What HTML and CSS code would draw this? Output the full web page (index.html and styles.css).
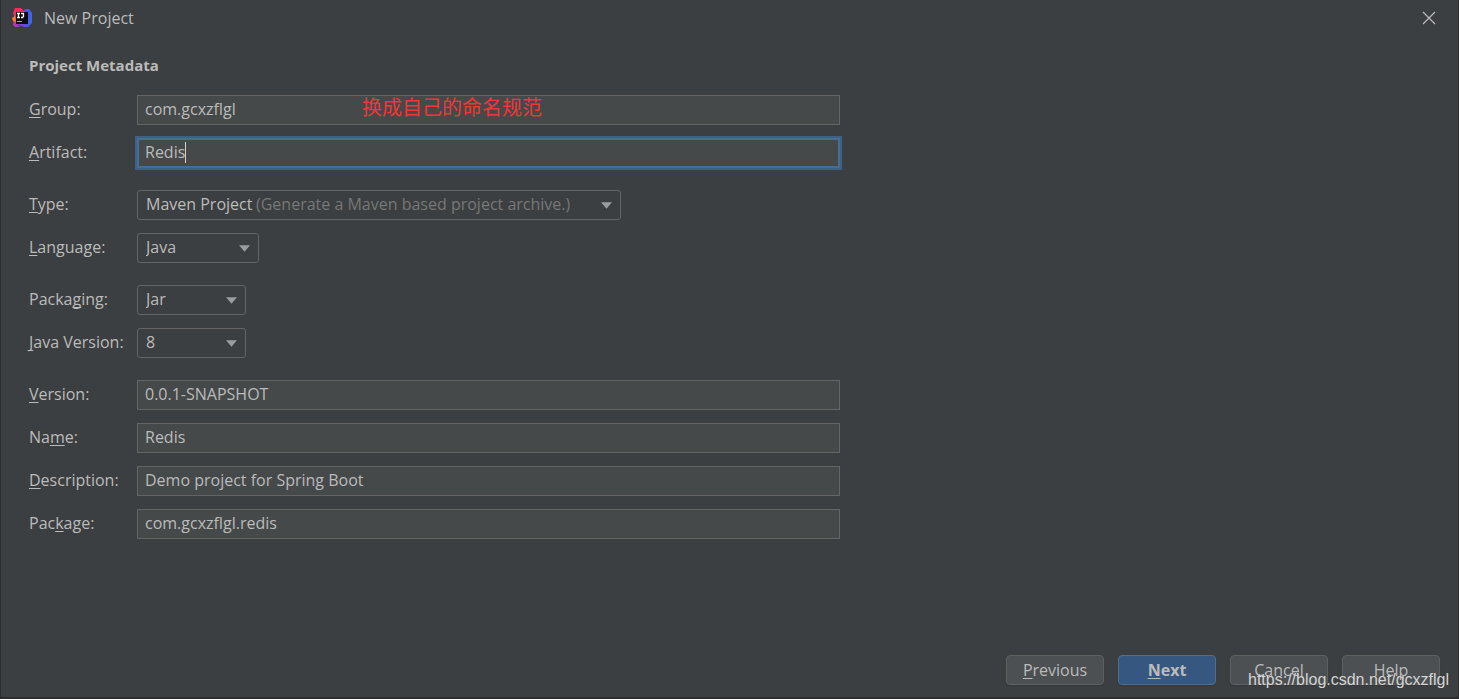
FILE: index.html
```html
<!DOCTYPE html>
<html lang="en">
<head>
<meta charset="utf-8">
<meta name="viewport" content="width=device-width, initial-scale=1">
<title>New Project</title>
<link rel="stylesheet" href="styles.css">
</head>
<body>
<main class="dialog">
  <header class="titlebar">
    <svg class="logo" viewBox="0 0 20 20" aria-hidden="true">
      <defs>
        <linearGradient id="lg-blue" x1="0" y1="0" x2="1" y2="0"><stop offset="0" stop-color="#a335c8"/><stop offset=".6" stop-color="#5a50d8"/><stop offset="1" stop-color="#2f6df2"/></linearGradient>
        <linearGradient id="lg-pink" x1="0" y1="0" x2="0" y2="1"><stop offset="0" stop-color="#fe2857"/><stop offset=".6" stop-color="#e8306a"/><stop offset="1" stop-color="#a335c8"/></linearGradient>
      </defs>
      <path fill="url(#lg-blue)" d="M13 1 17 1 20 5V15L16 19H12L4 16z"/>
      <path fill="url(#lg-pink)" d="M3 0 9 0 13 4 8 10 5 16 8 19H3L1 17 2 8 1 5z"/>
      <path fill="#fc801d" d="M0 10 3 8 4 14 1 13z"/>
      <path fill="#0c0c10" d="M4 4H16V16H4z"/>
      <path fill="none" stroke="#fff" stroke-width="1.3" d="M5 5.500H8M6.500 5V9M5 9.500H8M9 5.500H12M11.500 5V8.500L10.500 9.500H9"/>
      <path fill="#aaa" d="M5 13H10V14H5z"/>
    </svg>
    <h1 class="title">New Project</h1>
    <button class="close" type="button" aria-label="Close">
      <svg class="close-icon" viewBox="0 0 12 12" aria-hidden="true"><path d="M0 0 12 12M12 0 0 12"/></svg>
    </button>
  </header>

  <form class="content">
    <h2 class="heading">Project Metadata</h2>
    <div class="group">
      <div class="row">
        <label class="label" for="group"><u>G</u>roup:</label>
        <div class="field">
          <input class="text" id="group" type="text" value="com.gcxzflgl">
          <span class="note" lang="zh-CN">换成自己的命名规范</span>
        </div>
      </div>
      <div class="row">
        <label class="label" for="artifact"><u>A</u>rtifact:</label>
        <div class="field">
          <input class="text active" id="artifact" type="text" value="Redis">
          <span class="caret"></span>
        </div>
      </div>
    </div>
    <div class="group">
      <div class="row">
        <label class="label" for="type"><u>T</u>ype:</label>
        <div class="combo wide">
          <select class="select" id="type"><option>Maven Project</option></select>
          <span class="hint">(Generate a Maven based project archive.)</span>
          <svg class="arrow" viewBox="0 0 12 7" aria-hidden="true"><path d="M0 0H12L6 7z"/></svg>
        </div>
      </div>
      <div class="row">
        <label class="label" for="language"><u>L</u>anguage:</label>
        <div class="combo medium">
          <select class="select" id="language"><option>Java</option></select>
          <svg class="arrow" viewBox="0 0 12 7" aria-hidden="true"><path d="M0 0H12L6 7z"/></svg>
        </div>
      </div>
    </div>
    <div class="group">
      <div class="row">
        <label class="label" for="packaging">Packa<u>g</u>ing:</label>
        <div class="combo small">
          <select class="select" id="packaging"><option>Jar</option></select>
          <svg class="arrow" viewBox="0 0 12 7" aria-hidden="true"><path d="M0 0H12L6 7z"/></svg>
        </div>
      </div>
      <div class="row">
        <label class="label" for="java"><u>J</u>ava Version:</label>
        <div class="combo small">
          <select class="select" id="java"><option>8</option></select>
          <svg class="arrow" viewBox="0 0 12 7" aria-hidden="true"><path d="M0 0H12L6 7z"/></svg>
        </div>
      </div>
    </div>
    <div class="group">
      <div class="row">
        <label class="label" for="version"><u>V</u>ersion:</label>
        <input class="text" id="version" type="text" value="0.0.1-SNAPSHOT">
      </div>
      <div class="row">
        <label class="label" for="name">Na<u>m</u>e:</label>
        <input class="text" id="name" type="text" value="Redis">
      </div>
      <div class="row">
        <label class="label" for="description"><u>D</u>escription:</label>
        <input class="text" id="description" type="text" value="Demo project for Spring Boot">
      </div>
      <div class="row">
        <label class="label" for="package">Pac<u>k</u>age:</label>
        <input class="text" id="package" type="text" value="com.gcxzflgl.redis">
      </div>
    </div>
  </form>

  <footer class="actions">
    <button class="button" type="button"><u>P</u>revious</button>
    <button class="button primary" type="button"><u>N</u>ext</button>
    <button class="button" type="button">Cancel</button>
    <button class="button" type="button">Help</button>
    <span class="watermark">https://blog.csdn.net/gcxzflgl</span>
  </footer>
</main>
</body>
</html>
```
FILE: styles.css
```css
* { box-sizing: border-box; }

body {
  margin: 0;
  background: #3c3f41;
  color: #bbbbbb;
  font: 16px/20px "Open Sans", "Noto Sans", "Noto Sans CJK SC", sans-serif;
}

.dialog {
  display: flex;
  flex-direction: column;
  min-height: 100vh;
  border: solid #2b2d2e;
  border-width: 0 1px 2px;
}

u { text-underline-offset: 2px; text-decoration-thickness: 1px; text-decoration-skip-ink: none; }

.titlebar {
  display: flex;
  align-items: center;
  height: 36px;
  padding: 0 16px 0 11px;
}
.logo { width: 20px; height: 20px; }
.title { flex: 1; margin: 0 0 0 12px; font-size: 16px; font-weight: 400; }
.close {
  display: grid;
  place-items: center;
  width: 26px;
  height: 26px;
  padding: 0;
  border: 0;
  background: none;
}
.close-icon { width: 12px; height: 12px; overflow: visible; fill: none; stroke: #bbbbbb; stroke-width: 1.2; }

.content {
  display: flex;
  flex-direction: column;
  gap: 22px;
  width: 100%;
  max-width: 839px;
  padding: 19px 0 20px 28px;
}
.heading { margin: 0 0 -2px; font-size: 15px; line-height: 20px; font-weight: 700; }
.group { display: flex; flex-direction: column; gap: 13px; }
.row { display: grid; grid-template-columns: 108px minmax(0, 1fr); align-items: center; }
.label { padding-bottom: 2px; white-space: nowrap; }

.field { position: relative; }
.text {
  display: block;
  width: 100%;
  height: 30px;
  padding: 0 7px 2px;
  border: 1px solid #646464;
  border-radius: 0;
  outline: 0;
  background: #45494a;
  color: #bbbbbb;
  font: inherit;
}
.active { border-color: #466d94; box-shadow: 0 0 0 2px #3d6185, inset 0 0 0 1px #466d94; }
.caret { position: absolute; left: 48px; top: 4px; width: 1px; height: 21px; background: #d0d0d0; }
.note {
  position: absolute;
  left: 225px;
  top: 0;
  color: #f53535;
  font: 20px/24px "Noto Sans CJK SC", sans-serif;
}

.combo { position: relative; }
.wide { width: 484px; }
.medium { width: 122px; }
.small { width: 109px; }
.select {
  display: block;
  width: 100%;
  height: 30px;
  padding: 0 28px 2px 8px;
  border: 1px solid #646464;
  border-radius: 3px;
  appearance: none;
  background: #3c3f41;
  color: #bbbbbb;
  font: inherit;
}
.hint { position: absolute; left: 119px; top: 4px; color: #777777; white-space: nowrap; pointer-events: none; }
.arrow { position: absolute; right: 9px; top: 12px; width: 11px; height: 7px; fill: #9a9da0; pointer-events: none; }

.actions {
  position: relative;
  display: flex;
  justify-content: flex-end;
  gap: 14px;
  margin-top: auto;
  padding: 0 18px 12px;
}
.button {
  width: 98px;
  height: 30px;
  padding: 0;
  border: 1px solid #5e6060;
  border-radius: 4px;
  background: #4c5052;
  color: #bbbbbb;
  font: inherit;
  box-shadow: 0 1px 1px #36393b;
}
.primary { border-color: #4c708c; background: #365880; font-weight: 700; }
.watermark {
  position: absolute;
  right: 9px;
  bottom: 7px;
  color: #d4d4d4;
  font: 16px/20px "Liberation Sans", Arial, sans-serif;
  pointer-events: none;
}
```
